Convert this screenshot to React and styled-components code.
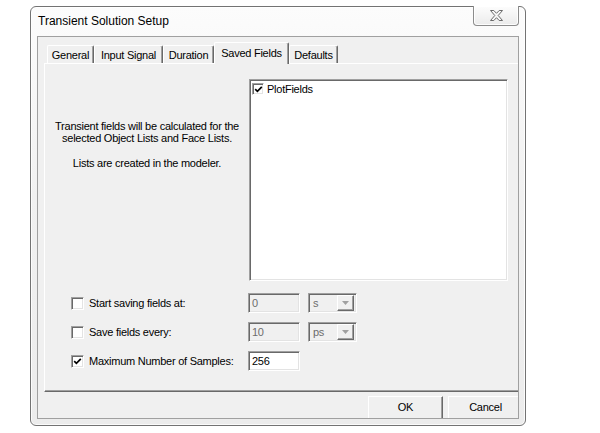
import React from "react";
import styled, { createGlobalStyle } from "styled-components";

const GlobalStyle = createGlobalStyle`
  html, body {
    margin: 0;
    padding: 0;
    background: #fff;
  }
  body {
    font-family: "Liberation Sans", Arial, sans-serif;
    font-size: 11px;
    letter-spacing: -0.25px;
    color: #000;
  }
  * {
    box-sizing: border-box;
  }
`;

const Page = styled.div`
  width: 600px;
  height: 433px;
  padding: 6px 0 0 30px;
`;

const Window = styled.div`
  width: 496px;
  height: 420px;
  border: 1px solid #737373;
  border-radius: 6px;
  background: linear-gradient(to bottom, #fcfcfc 0%, #f1f1f1 45%, #ececec 100%);
  box-shadow: inset 0 0 0 1px rgba(255, 255, 255, 0.8);
  padding: 0 6px 6px 6px;
  display: flex;
  flex-direction: column;
`;

const TitleBar = styled.div`
  height: 29px;
  flex-shrink: 0;
  display: flex;
  align-items: flex-start;
`;

const Title = styled.div`
  font-size: 12px;
  letter-spacing: 0;
  line-height: 28px;
  padding-left: 1px;
  color: #000;
`;

const CloseButton = styled.div`
  margin-left: auto;
  margin-top: -1px;
  width: 46px;
  height: 20px;
  border: 1px solid #8c8c8c;
  border-top: none;
  border-radius: 0 0 4px 4px;
  background: linear-gradient(to bottom, #fdfdfd, #ebebeb);
  box-shadow: inset 0 0 0 1px rgba(255, 255, 255, 0.9);
  display: flex;
  align-items: center;
  justify-content: center;
`;

const Client = styled.div`
  flex: 1;
  min-height: 0;
  border: 1px solid #a0a0a0;
  background: #f0f0f0;
  padding: 5px 0 0 6px;
  overflow: hidden;
  display: flex;
  flex-direction: column;
`;

const TabRow = styled.div`
  height: 21px;
  flex-shrink: 0;
  display: flex;
  align-items: flex-end;
  padding-left: 3px;
`;

const Tab = styled.div`
  position: relative;
  z-index: ${(p) => (p.$active ? 2 : 1)};
  width: ${(p) => p.$w}px;
  height: ${(p) => (p.$active ? 22 : 18)}px;
  margin-bottom: ${(p) => (p.$active ? -1 : 0)}px;
  padding-bottom: ${(p) => (p.$active ? 2 : 0)}px;
  display: flex;
  align-items: center;
  justify-content: center;
  background: #f0f0f0;
  border-top: 1px solid #fff;
  border-left: 1px solid #fff;
  border-right: 1px solid #696969;
  box-shadow: inset -1px 0 #a0a0a0;
  border-radius: 2px 2px 0 0;
  white-space: nowrap;
`;

const Panel = styled.div`
  height: 329px;
  flex-shrink: 0;
  border-top: 1px solid #fff;
  border-left: 1px solid #fff;
  border-bottom: 1px solid #696969;
  box-shadow: inset 0 -1px #a0a0a0;
  padding-top: 15px;
  display: flex;
  flex-direction: column;
`;

const TopSection = styled.div`
  display: flex;
`;

const Description = styled.div`
  width: 204px;
  padding-top: 41px;
  text-align: center;
  line-height: 12px;
  p {
    margin: 0;
  }
  p + p {
    margin-top: 13px;
  }
`;

const Sunken = styled.div`
  border: 1px solid;
  border-color: #a0a0a0 #fff #fff #a0a0a0;
  box-shadow: inset 1px 1px #696969, inset -1px -1px #e3e3e3;
`;

const ListBox = styled(Sunken)`
  width: 259px;
  height: 202px;
  background: #fff;
  padding: 2px 2px;
`;

const ListItem = styled.div`
  display: flex;
  align-items: center;
  height: 14px;
  gap: 3px;
`;

const Box = styled(Sunken)`
  width: ${(p) => p.$size}px;
  height: ${(p) => p.$size}px;
  background: #fff;
  display: flex;
  align-items: center;
  justify-content: center;
  flex-shrink: 0;
`;

const Form = styled.div`
  margin-top: 12px;
  display: flex;
  flex-direction: column;
  gap: 9px;
  padding-left: 26px;
`;

const Row = styled.div`
  height: 20px;
  display: flex;
  align-items: center;
`;

const Label = styled.div`
  width: 164px;
  padding-left: 5px;
  white-space: nowrap;
`;

const Input = styled(Sunken)`
  width: 52px;
  height: 20px;
  background: ${(p) => (p.$disabled ? "#f0f0f0" : "#fff")};
  color: ${(p) => (p.$disabled ? "#6d6d6d" : "#000")};
  padding: 3px 3px 0;
  line-height: 13px;
`;

const Combo = styled(Sunken)`
  width: 49px;
  height: 20px;
  margin-left: 8px;
  background: #f0f0f0;
  color: #6d6d6d;
  display: flex;
  align-items: center;
  justify-content: space-between;
  padding: 2px 2px 2px 4px;
`;

const ComboArrow = styled.div`
  width: 17px;
  height: 16px;
  border: 1px solid;
  border-color: #fff #696969 #696969 #fff;
  box-shadow: inset -1px -1px #a0a0a0;
  background: #f0f0f0;
  display: flex;
  align-items: center;
  justify-content: center;
`;

const ButtonBar = styled.div`
  flex-shrink: 0;
  display: flex;
  justify-content: flex-end;
  gap: 5px;
  padding-top: 4px;
  margin-right: -5px;
`;

const Button = styled.div`
  width: 75px;
  height: 26px;
  border: 1px solid;
  border-color: #fff #696969 #696969 #fff;
  box-shadow: inset -1px -1px #a0a0a0;
  background: #f0f0f0;
  display: flex;
  align-items: flex-start;
  justify-content: center;
  padding-top: 4px;
`;

const Check = () => (
  <svg width="9" height="9" viewBox="0 0 9 9">
    <path d="M1.2 4.2 L3.4 6.4 L7.8 1.8" fill="none" stroke="#000" strokeWidth="1.7" />
  </svg>
);

const DownArrow = () => (
  <svg width="7" height="4" viewBox="0 0 7 4">
    <path d="M0 0 H7 L3.5 4 Z" fill="#a0a0a0" />
  </svg>
);

const CloseGlyph = () => (
  <svg width="13" height="11" viewBox="0 0 13 11">
    <path
      d="M0.5 0.5 H3.8 L6.5 3.3 L9.2 0.5 H12.5 L8.2 5.5 L12.5 10.5 H9.2 L6.5 7.7 L3.8 10.5 H0.5 L4.8 5.5 Z"
      fill="#f7f7f7"
      stroke="#6b6b6b"
      strokeWidth="1"
      strokeLinejoin="round"
    />
  </svg>
);

const tabs = [
  { label: "General", w: 47 },
  { label: "Input Signal", w: 69 },
  { label: "Duration", w: 51 },
  { label: "Saved Fields", w: 75, active: true },
  { label: "Defaults", w: 49 },
];

export default function App() {
  return (
    <>
      <GlobalStyle />
      <Page>
        <Window>
          <TitleBar>
            <Title>Transient Solution Setup</Title>
            <CloseButton>
              <CloseGlyph />
            </CloseButton>
          </TitleBar>
          <Client>
            <TabRow>
              {tabs.map((t) => (
                <Tab key={t.label} $w={t.w} $active={t.active}>
                  {t.label}
                </Tab>
              ))}
            </TabRow>
            <Panel>
              <TopSection>
                <Description>
                  <p>
                    Transient fields will be calculated for the
                    <br />
                    selected Object Lists and Face Lists.
                  </p>
                  <p>Lists are created in the modeler.</p>
                </Description>
                <ListBox>
                  <ListItem>
                    <Box $size={12}>
                      <Check />
                    </Box>
                    PlotFields
                  </ListItem>
                </ListBox>
              </TopSection>
              <Form>
                <Row>
                  <Box $size={13} />
                  <Label>Start saving fields at:</Label>
                  <Input $disabled>0</Input>
                  <Combo>
                    s
                    <ComboArrow>
                      <DownArrow />
                    </ComboArrow>
                  </Combo>
                </Row>
                <Row>
                  <Box $size={13} />
                  <Label>Save fields every:</Label>
                  <Input $disabled>10</Input>
                  <Combo>
                    ps
                    <ComboArrow>
                      <DownArrow />
                    </ComboArrow>
                  </Combo>
                </Row>
                <Row>
                  <Box $size={13}>
                    <Check />
                  </Box>
                  <Label>Maximum Number of Samples:</Label>
                  <Input>256</Input>
                </Row>
              </Form>
            </Panel>
            <ButtonBar>
              <Button>OK</Button>
              <Button>Cancel</Button>
            </ButtonBar>
          </Client>
        </Window>
      </Page>
    </>
  );
}
